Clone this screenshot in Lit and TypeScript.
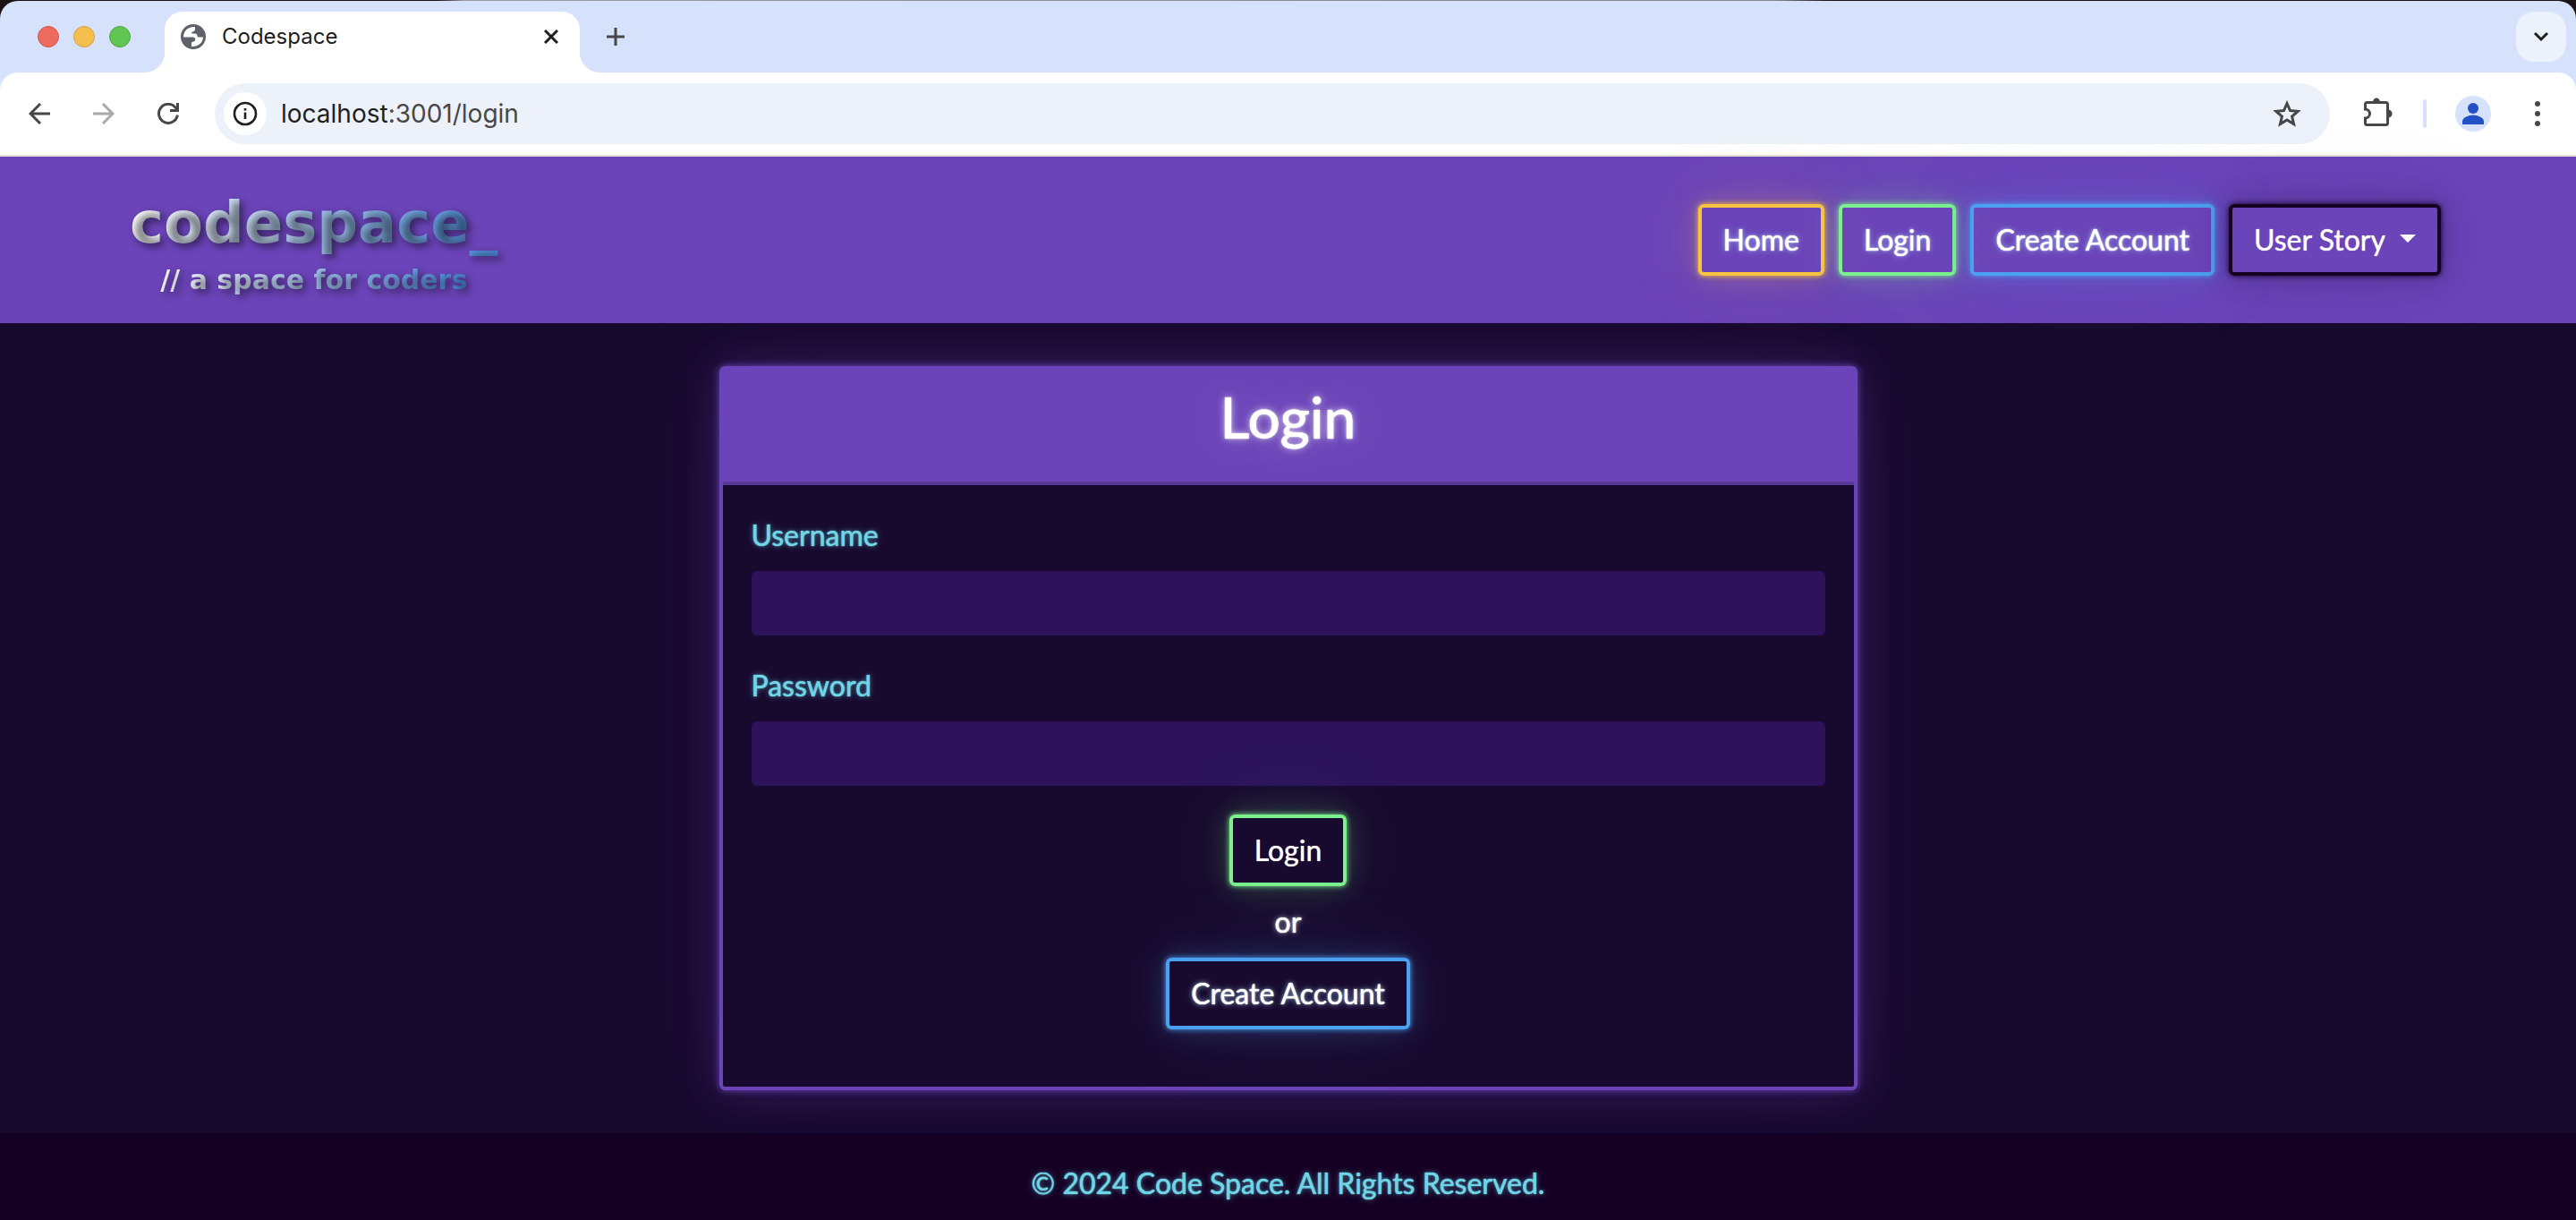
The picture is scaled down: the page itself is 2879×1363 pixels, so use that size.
import { LitElement, html, css } from "lit";
import { customElement } from "lit/decorators.js";

@customElement("browser-chrome")
class BrowserChrome extends LitElement {
  static styles = css`
    :host {
      display: block;
      background: linear-gradient(to right, #1a1214 17%, #9a98a0 18%, #85858f 69%, #1a1214 71%);
      padding-top: 1px;
      font-family: Inter, "Liberation Sans", sans-serif;
    }
    .window {
      background: #d6e1fb;
      border-radius: 20px 20px 0 0;
    }
    button {
      display: grid;
      place-items: center;
      padding: 0;
      border: 0;
      background: none;
      color: #474747;
    }
    svg {
      display: block;
    }
    .strip {
      display: flex;
      align-items: flex-end;
      height: 80px;
    }
    .lights {
      display: flex;
      gap: 16px;
      align-self: center;
      padding-left: 42px;
    }
    .light {
      width: 24px;
      height: 24px;
      border-radius: 50%;
      box-sizing: border-box;
    }
    .close {
      background: #ec6a5e;
      border: 1px solid #d55549;
    }
    .min {
      background: #f4bf4f;
      border: 1px solid #d8a13d;
    }
    .max {
      background: #61c554;
      border: 1px solid #4fa73f;
    }
    .flare {
      width: 24px;
      height: 24px;
      background: radial-gradient(circle at 0 0, transparent 24px, #fff 25px);
    }
    .flare.right {
      background: radial-gradient(circle at 100% 0, transparent 24px, #fff 25px);
    }
    .lights + .flare {
      margin-left: 14px;
    }
    .tab {
      display: flex;
      align-items: center;
      width: 464px;
      height: 68px;
      padding: 0 18px 12px;
      box-sizing: border-box;
      border-radius: 20px 20px 0 0;
      background: #fff;
    }
    .title {
      flex: 1;
      padding-left: 18px;
      font-size: 24px;
      color: #1f1f1f;
    }
    .tab button {
      width: 28px;
      height: 28px;
      color: #1f1f1f;
    }
    .new {
      width: 32px;
      height: 32px;
      margin-bottom: 24px;
    }
    .search {
      width: 56px;
      height: 56px;
      margin: 0 11px 12px auto;
      border-radius: 20px;
      background: #ebf2fc;
      color: #1f1f1f;
    }
    .bar {
      display: flex;
      align-items: center;
      height: 92px;
      padding: 0 25px 0 24px;
      border-radius: 20px 20px 0 0;
      border-bottom: 2px solid #dfe1df;
      background: #fff;
    }
    .nav {
      display: flex;
      gap: 32px;
    }
    .nav button {
      width: 40px;
      height: 40px;
    }
    .nav .off {
      color: #a9a9a9;
    }
    .omni {
      flex: 1;
      display: flex;
      align-items: center;
      height: 68px;
      margin-left: 32px;
      padding: 0 28px 0 10px;
      border-radius: 34px;
      background: #edf2fa;
    }
    .info {
      width: 48px;
      height: 48px;
      border-radius: 50%;
      background: #fff;
      color: #1f1f1f;
    }
    .url {
      flex: 1;
      padding-left: 16px;
      font-size: 28px;
      color: #474747;
    }
    .host {
      color: #1f1f1f;
    }
    .tools {
      display: flex;
      align-items: center;
      padding-left: 34px;
    }
    .rule {
      width: 4px;
      height: 32px;
      margin: 0 32px 0 30px;
      border-radius: 2px;
      background: #d6e1fb;
    }
    .more {
      margin-left: 34px;
    }
  `;

  render() {
    return html`
      <div class="window">
        <div class="strip">
          <div class="lights">
            <span class="light close"></span>
            <span class="light min"></span>
            <span class="light max"></span>
          </div>
          <span class="flare"></span>
          <div class="tab">
            <svg width="28" height="28" viewBox="0 0 28 28">
              <circle cx="14" cy="14" r="14" fill="#5f6368" />
              <path
                d="M3 14.500A11 11 0 0 1 16 3.200V5.500C16 7.500 14.500 8.500 13 8.500C12.300 8.500 12 9.500 12.500 10.500H15.500C17.500 10.500 18.500 11.500 18.500 13C18.500 14 19 14.500 20 14.500H25A11 11 0 0 1 12 24.800V21.500C12 20.300 12.500 19.500 14 19.500C15.500 19.500 16.200 18.500 16.200 17C16.200 15.500 15.200 14.500 13.500 14.500Z"
                fill="#fff"
              />
            </svg>
            <span class="title">Codespace</span>
            <button aria-label="Close tab">
              <svg width="16" height="16" viewBox="0 0 16 16" fill="none" stroke="currentColor" stroke-width="3">
                <path d="M1 1l14 14M15 1L1 15" />
              </svg>
            </button>
          </div>
          <span class="flare right"></span>
          <button class="new" aria-label="New tab">
            <svg width="20" height="20" viewBox="0 0 20 20" stroke="currentColor" stroke-width="3">
              <path d="M10 0v20M0 10h20" />
            </svg>
          </button>
          <button class="search" aria-label="Search tabs">
            <svg width="18" height="12" viewBox="0 0 18 12" fill="none" stroke="currentColor" stroke-width="3">
              <path d="M2 2l7 7 7-7" />
            </svg>
          </button>
        </div>
        <div class="bar">
          <div class="nav">
            <button aria-label="Back">
              <svg width="24" height="24" viewBox="0 0 24 24" fill="none" stroke="currentColor" stroke-width="3">
                <path d="M24 12H2M13 1L2 12l11 11" />
              </svg>
            </button>
            <button class="off" aria-label="Forward">
              <svg width="24" height="24" viewBox="0 0 24 24" fill="none" stroke="currentColor" stroke-width="3">
                <path d="M0 12h22M11 1l11 11-11 11" />
              </svg>
            </button>
            <button aria-label="Reload">
              <svg width="24" height="24" viewBox="0 0 24 24" fill="none" stroke="currentColor" stroke-width="3">
                <path d="M22.400 13.500A10.500 10.500 0 1 1 20 5l2.500 3.500M22.500 0v8.500H14" />
              </svg>
            </button>
          </div>
          <div class="omni">
            <button class="info" aria-label="Site information">
              <svg width="28" height="28" viewBox="0 0 28 28" fill="none" stroke="currentColor">
                <circle cx="14" cy="14" r="12" stroke-width="2.600" />
                <path d="M14 12.500v7.500M14 8v2.600" stroke-width="2.600" />
              </svg>
            </button>
            <span class="url"><span class="host">localhost</span>:3001/login</span>
            <button aria-label="Bookmark">
              <svg width="40" height="40" viewBox="0 0 40 40" fill="none" stroke="currentColor" stroke-width="3">
                <path d="M20 8.500l3.500 8 8.700.8-6.600 5.800 2 8.500-7.600-4.600-7.600 4.600 2-8.500-6.600-5.800 8.700-.8z" />
              </svg>
            </button>
          </div>
          <div class="tools">
            <button aria-label="Extensions">
              <svg width="40" height="40" viewBox="0 0 40 40">
                <path
                  d="M7.500 7.500h21a2 2 0 0 1 2 2v21a2 2 0 0 1-2 2h-21a2 2 0 0 1-2-2v-5.500a5 5 0 0 0 0-10v-5.500a2 2 0 0 1 2-2z"
                  fill="none"
                  stroke="currentColor"
                  stroke-width="3"
                />
                <path d="M14 7a4 4.500 0 0 1 8 0zM31 15.500a4.600 4.500 0 0 1 0 9z" fill="currentColor" />
              </svg>
            </button>
            <span class="rule"></span>
            <button aria-label="Profile">
              <svg width="40" height="40" viewBox="0 0 40 40">
                <circle cx="20" cy="20" r="20" fill="#d6e1fb" />
                <circle cx="20" cy="14" r="6" fill="#2450c5" />
                <path d="M8 32v-3.500c0-4 7-7 12-7s12 3 12 7V32z" fill="#2450c5" />
              </svg>
            </button>
            <button class="more" aria-label="Menu">
              <svg width="36" height="36" viewBox="0 0 36 36" fill="currentColor">
                <circle cx="18" cy="7" r="3" />
                <circle cx="18" cy="18" r="3" />
                <circle cx="18" cy="29" r="3" />
              </svg>
            </button>
          </div>
        </div>
      </div>
    `;
  }
}

@customElement("app-root")
class AppRoot extends LitElement {
  static styles = css`
    :host {
      --purple: #6b44b9;
      --night: #180a2e;
      --green: #7bf08c;
      --blue: #4ca0f0;
      --amber: #f9c440;
      --ink: #150024;
      --cyan: #6fd6e6;
      display: flex;
      flex-direction: column;
      min-height: 100vh;
      background: var(--night);
      color: #fff;
      font-family: Lato, sans-serif;
      font-size: 32px;
      line-height: 48px;
    }
    .top {
      display: flex;
      justify-content: space-between;
      align-items: center;
      height: 186px;
      padding: 0 151px 0 145px;
      background: var(--purple);
    }
    .brand {
      display: flex;
      flex-direction: column;
      align-items: center;
      gap: 6px;
      padding-top: 8px;
      font-family: "DejaVu Sans", sans-serif;
      font-weight: 700;
      text-decoration: none;
    }
    .name,
    .tag {
      background: linear-gradient(to right, #fff, #4a8ad8);
      -webkit-background-clip: text;
      background-clip: text;
      color: transparent;
      text-shadow: 4px 4px 8px rgba(0, 0, 0, 0.5);
    }
    .name {
      font-size: 64px;
      line-height: 76px;
    }
    .tag {
      font-size: 30px;
      line-height: 40px;
    }
    .links {
      display: flex;
      gap: 16px;
    }
    .btn {
      --glow: var(--green);
      box-sizing: border-box;
      height: 80px;
      padding: 12px 24px;
      border: 4px solid var(--glow);
      border-radius: 6px;
      background: none;
      color: #fff;
      font: inherit;
      text-decoration: none;
      text-shadow: 0 0 1px #fff;
      box-shadow:
        0 0 6px var(--glow),
        0 0 32px color-mix(in srgb, var(--glow) 25%, transparent),
        0 0 100px color-mix(in srgb, var(--glow) 10%, transparent);
    }
    .lit {
      text-shadow:
        0 0 1px #fff,
        0 0 2px rgba(255, 255, 255, 0.6),
        0 0 6px rgba(160, 220, 255, 0.8);
    }
    .home {
      --glow: var(--amber);
    }
    .create {
      --glow: var(--blue);
    }
    .story {
      --glow: var(--ink);
      display: flex;
      align-items: center;
      gap: 16px;
    }
    .caret {
      border: 9px solid transparent;
      border-top-color: #fff;
      border-bottom: 0;
      margin-bottom: 4px;
    }
    main {
      display: flex;
      justify-content: center;
      padding: 48px 32px;
    }
    .card {
      flex: 0 1 1264px;
      border: 4px solid var(--purple);
      border-radius: 6px;
      box-shadow:
        0 0 8px var(--purple),
        0 0 48px color-mix(in srgb, var(--purple) 30%, transparent),
        0 0 120px color-mix(in srgb, var(--purple) 10%, transparent);
    }
    .head {
      padding: 14px 32px 34px;
      border-bottom: 4px solid #573a98;
      background: var(--purple);
      text-align: center;
    }
    h1 {
      margin: 0;
      font-size: 64px;
      line-height: 77px;
      font-weight: 500;
      text-shadow:
        0 0 1px #fff,
        0 0 2px #fff,
        0 0 8px rgba(255, 255, 255, 0.7),
        0 0 48px rgba(255, 255, 255, 0.25);
    }
    form {
      display: flex;
      flex-direction: column;
      align-items: center;
      padding: 32px 32px 64px;
    }
    label,
    footer {
      color: var(--cyan);
      text-shadow:
        0 0 1px var(--cyan),
        0 0 2px rgba(111, 214, 230, 0.6),
        0 0 6px rgba(111, 214, 230, 0.6);
    }
    label {
      align-self: stretch;
      margin-bottom: 16px;
    }
    input {
      width: 100%;
      height: 72px;
      box-sizing: border-box;
      margin: 0 0 32px;
      padding: 12px 24px;
      border: 0;
      border-radius: 6px;
      background: #2c135b;
      color: #fff;
      font: inherit;
    }
    p {
      margin: 16px 0;
      text-shadow:
        0 0 1px #fff,
        0 0 2px rgba(255, 255, 255, 0.6),
        0 0 6px rgba(255, 255, 255, 0.7);
    }
    footer {
      flex: 1;
      padding: 32px 32px 16px;
      background: var(--ink);
      text-align: center;
    }
  `;

  render() {
    return html`
      <browser-chrome></browser-chrome>
      <header class="top">
        <a class="brand" href="#home">
          <span class="name">codespace_</span>
          <span class="tag">// a space for coders</span>
        </a>
        <nav class="links">
          <a class="btn lit home" href="#home">Home</a>
          <a class="btn lit" href="#login">Login</a>
          <a class="btn lit create" href="#create">Create Account</a>
          <button class="btn story" type="button">User Story <span class="caret"></span></button>
        </nav>
      </header>
      <main>
        <section class="card">
          <div class="head"><h1>Login</h1></div>
          <form @submit=${(e: Event) => e.preventDefault()}>
            <label for="username">Username</label>
            <input id="username" type="text" />
            <label for="password">Password</label>
            <input id="password" type="password" />
            <button class="btn" type="submit">Login</button>
            <p>or</p>
            <a class="btn lit create" href="#create">Create Account</a>
          </form>
        </section>
      </main>
      <footer>© 2024 Code Space. All Rights Reserved.</footer>
    `;
  }
}
